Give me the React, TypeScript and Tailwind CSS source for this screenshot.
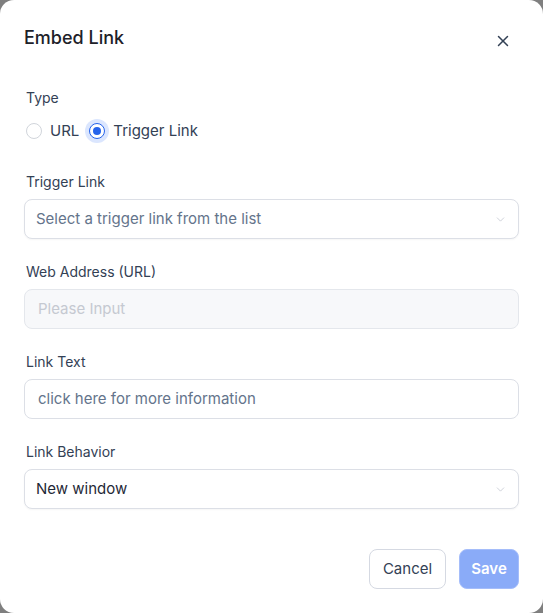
import { X, ChevronDown } from "lucide-react";

function Label({ children }: { children: React.ReactNode }) {
  return (
    <div className="mb-1.5 px-0.5 text-[14px] leading-[22px] text-[#334155]">
      {children}
    </div>
  );
}

function SelectBox({ value, placeholder }: { value?: string; placeholder?: string }) {
  return (
    <div className="flex h-10 items-center justify-between rounded-lg border border-[#dcdfe6] bg-white pl-[11px] pr-[11px] shadow-[0_1px_2px_rgba(0,0,0,0.04)]">
      <span className={`text-[15px] ${value ? "text-[#1f2937]" : "text-[#64748b]"}`}>
        {value ?? placeholder}
      </span>
      <ChevronDown size={13} strokeWidth={1.25} className="text-[#b8bcc6]" />
    </div>
  );
}

function Radio({ checked, label }: { checked?: boolean; label: string }) {
  return (
    <label className="flex items-center gap-2">
      <span
        className={`flex h-4 w-4 items-center justify-center rounded-full border bg-white ${
          checked
            ? "border-[#2563eb] ring-4 ring-[#dbe6fe]"
            : "border-[#d1d5db]"
        }`}
      >
        {checked && <span className="h-2 w-2 rounded-full bg-[#2563eb]" />}
      </span>
      <span className="text-[15px] text-[#334155]">{label}</span>
    </label>
  );
}

export default function App() {
  return (
    <div
      className="h-[613px] w-[543px] bg-[#7f7f7f]"
      style={{ fontFamily: "Inter, 'Noto Sans', sans-serif" }}
    >
      <div className="flex h-full flex-col rounded-[14px] bg-white px-6">
        {/* Header */}
        <div className="flex items-center justify-between pt-6">
          <h2 className="text-[18px] font-medium leading-7 text-[#1d2129]">Embed Link</h2>
          <X size={18} strokeWidth={2} className="mr-[7px] mt-1.5 text-[#334155]" />
        </div>

        {/* Type */}
        <div className="mt-[35px]">
          <Label>Type</Label>
          <div className="flex h-8 items-center gap-2.5 pl-0.5">
            <Radio label="URL" />
            <Radio checked label="Trigger Link" />
          </div>
        </div>

        <div className="mt-6">
          <Label>Trigger Link</Label>
          <SelectBox placeholder="Select a trigger link from the list" />
        </div>

        <div className="mt-[22px]">
          <Label>Web Address (URL)</Label>
          <div className="flex h-10 items-center rounded-lg border border-[#e4e7ec] bg-[#f7f8fa] px-[13px]">
            <span className="text-[15px] text-[#c5c9d1]">Please Input</span>
          </div>
        </div>

        <div className="mt-[22px]">
          <Label>Link Text</Label>
          <div className="flex h-10 items-center rounded-lg border border-[#dcdfe6] bg-white px-[13px]">
            <span className="text-[15px] text-[#64748b]">click here for more information</span>
          </div>
        </div>

        <div className="mt-[22px]">
          <Label>Link Behavior</Label>
          <SelectBox value="New window" />
        </div>

        {/* Footer */}
        <div className="mt-10 flex justify-end gap-[13px]">
          <button className="h-10 w-[77px] rounded-lg border border-[#d5d9e2] bg-white text-[15px] text-[#334155]">
            Cancel
          </button>
          <button className="h-10 w-[60px] rounded-lg border border-[#a5bdfa] bg-[#8aabf8] text-[15px] font-semibold text-white">
            Save
          </button>
        </div>
      </div>
    </div>
  );
}
